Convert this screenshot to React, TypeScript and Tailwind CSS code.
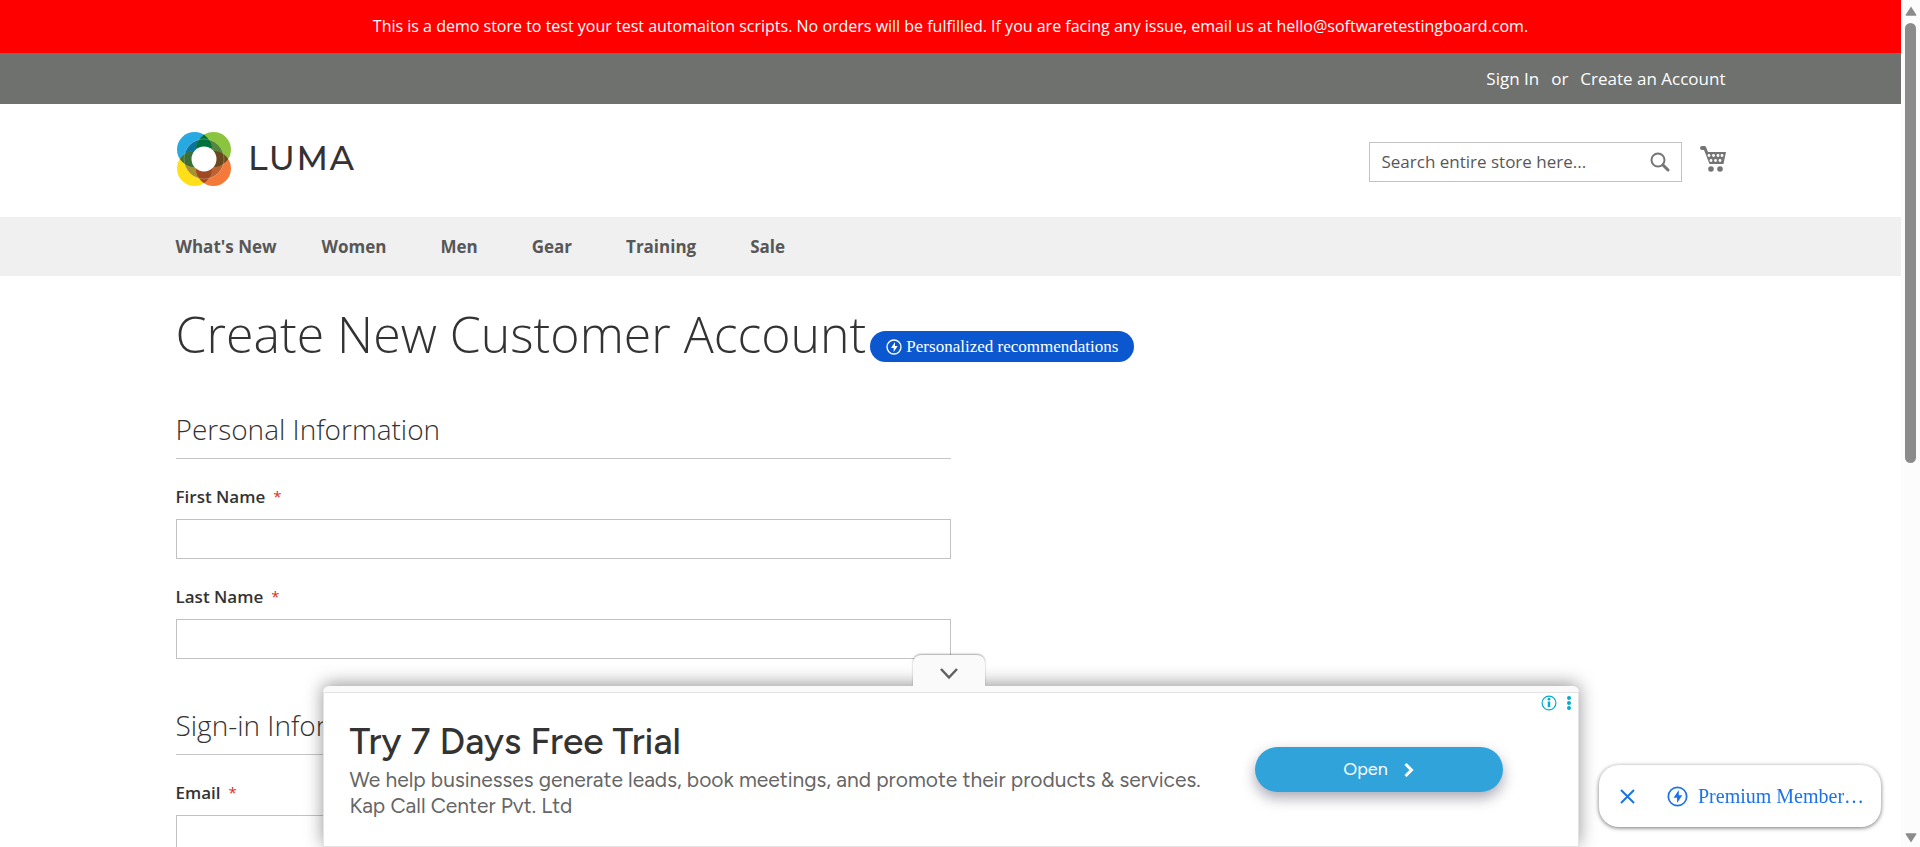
import type { ReactNode } from "react";

const navItems = ["What's New", "Women", "Men", "Gear", "Training", "Sale"];

const basketHoles = [
  [9, 9.5], [13.500, 9.5], [18, 9.5], [22, 9.5],
  [11, 14.500], [15.500, 14.500], [20, 14.500],
];

function Container({ children, className = "" }: { children: ReactNode; className?: string }) {
  return <div className={"mx-auto w-full max-w-[1550px] " + className}>{children}</div>;
}

function LumaLogo() {
  return (
    <svg viewBox="0 0 184 54" className="h-[54px] w-[184px]" role="img" aria-label="Luma">
      <clipPath id="tl"><circle cx="17.5" cy="17.5" r="17.5" /></clipPath>
      <clipPath id="tr"><circle cx="36.500" cy="17.5" r="17.5" /></clipPath>
      <clipPath id="bl"><circle cx="17.5" cy="36.500" r="17.5" /></clipPath>
      <clipPath id="br"><circle cx="36.500" cy="36.500" r="17.5" /></clipPath>
      <circle cx="17.5" cy="17.5" r="17.5" fill="#27a9e1" />
      <circle cx="36.500" cy="17.5" r="17.5" fill="#8bc53f" />
      <circle cx="17.5" cy="36.500" r="17.5" fill="#ffdf17" />
      <circle cx="36.500" cy="36.500" r="17.5" fill="#f47a3a" />
      <circle cx="27" cy="27" r="20" fill="#0c749c" clipPath="url(#tl)" />
      <circle cx="27" cy="27" r="20" fill="#54863c" clipPath="url(#tr)" />
      <circle cx="27" cy="27" r="20" fill="#a79230" clipPath="url(#bl)" />
      <circle cx="27" cy="27" r="20" fill="#bd6230" clipPath="url(#br)" />
      <g clipPath="url(#tl)">
        <circle cx="36.500" cy="17.5" r="17.5" fill="#00703c" />
        <circle cx="17.5" cy="36.500" r="17.5" fill="#3a6f35" />
      </g>
      <g clipPath="url(#br)">
        <circle cx="36.500" cy="17.5" r="17.5" fill="#68481f" />
        <circle cx="17.5" cy="36.500" r="17.5" fill="#a04a24" />
      </g>
      <circle cx="27" cy="27" r="20" fill="none" stroke="#ffffff" strokeOpacity="0.25" />
      <circle cx="27" cy="27" r="12.500" fill="#fff" />
      <text x="71" y="38" className="fill-[#333] font-['Montserrat',Lato,sans-serif] text-[33px] font-medium tracking-wider">LUMA</text>
    </svg>
  );
}

function Bolt({ className }: { className: string }) {
  return (
    <svg viewBox="0 0 24 24" className={className} fill="none" aria-hidden="true">
      <circle cx="12" cy="12" r="10.500" stroke="currentColor" strokeWidth="2" />
      <path d="M13.500 4.500 7.500 13.500h4v6l6-9h-4z" fill="currentColor" />
    </svg>
  );
}

function Field({ id, label }: { id: string; label: string }) {
  return (
    <div className="mb-[25px]">
      <label htmlFor={id} className="mb-2.5 flex h-[25px] items-center gap-2 text-[17px] font-semibold text-[#333]">
        {label}
        <span className="text-[15px] font-normal text-[#e02b27]">*</span>
      </label>
      <input id={id} className="block h-10 w-full border border-[#c2c2c2] bg-white px-3 text-[17px]" />
    </div>
  );
}

function Legend({ children }: { children: ReactNode }) {
  return (
    <h2 className="mb-[25px] border-b border-[#c6c6c6] pb-3 text-[28px] leading-[34px] font-light text-[#333]">
      {children}
    </h2>
  );
}

function Scrollbar() {
  return (
    <div className="fixed inset-y-0 right-0 flex w-[19px] flex-col items-center justify-between bg-[#fcfcfc] pt-1.5 pb-1" aria-hidden="true">
      <div className="flex flex-col items-center gap-[7px]">
        <svg viewBox="0 0 12 10" className="h-2.5 w-3"><path d="M6 0.500 11.500 9a1 1 0 0 1-1 .8h-9a1 1 0 0 1-1-.8z" fill="#8b8b8b" /></svg>
        <div className="h-[52vh] w-[11px] rounded-full bg-[#8b8b8b]" />
      </div>
      <svg viewBox="0 0 12 10" className="h-2.5 w-3"><path d="M6 9.500 11.500 1a1 1 0 0 0-1-.8h-9a1 1 0 0 0-1 .8z" fill="#8b8b8b" /></svg>
    </div>
  );
}

function AdBanner() {
  return (
    <aside className="fixed right-[19px] bottom-0 left-0 mx-auto max-w-[1256px] rounded-t-md bg-[#fafafa] pt-1.5 shadow-[0_-2px_18px_rgba(0,0,0,0.42)]">
      <button aria-label="Hide advertisement" className="absolute right-1 bottom-full left-0 mx-auto flex h-[31px] w-[72px] items-center justify-center rounded-t-lg bg-[#fafafa] shadow-[0_-1px_2px_rgba(0,0,0,0.35)] [clip-path:inset(-4px_-4px_0_-4px)]">
        <svg viewBox="0 0 18 12" className="mt-1.5 h-3 w-[18px]" fill="none" stroke="#616161" strokeWidth="2.500"><path d="m1 1 8 8.500L17 1" /></svg>
      </button>
      <div className="relative flex h-[155px] items-center border border-[#e3e3e3] bg-white pr-[75px] pl-[26px] font-['Figtree',Lato,sans-serif]">
        <div className="flex-1 pb-0.5">
          <h3 className="text-[37px] leading-[44px] font-medium text-[#333]">Try 7 Days Free Trial</h3>
          <p className="pt-1 text-[21px] leading-[26px] text-[#666]">
            We help businesses generate leads, book meetings, and promote their products &amp; services.
            <br />
            Kap Call Center Pvt. Ltd
          </p>
        </div>
        <button className="flex h-[45px] w-[248px] items-center justify-center gap-4 rounded-full bg-[#30a3db] text-[18px] text-white shadow-[0_6px_14px_rgba(40,40,70,0.4)]">
          Open
          <svg viewBox="0 0 10 14" className="h-3.5 w-2.5" fill="none" stroke="#fff" strokeWidth="3"><path d="m1.500 1 6 6-6 6" /></svg>
        </button>
        <div className="absolute top-0.5 right-[7px] flex items-center gap-2.5">
          <svg viewBox="0 0 16 16" className="size-4" fill="none"><circle cx="8" cy="8" r="6.900" stroke="#00aecd" strokeWidth="1.200" /><path d="M8 6.500V12" stroke="#00aecd" strokeWidth="2.500" /><circle cx="8" cy="4.200" r="1.400" fill="#00aecd" /></svg>
          <svg viewBox="0 0 4 16" className="h-4 w-1" fill="#00aecd"><circle cx="2" cy="3" r="2" /><circle cx="2" cy="8" r="2" /><circle cx="2" cy="13" r="2" /></svg>
        </div>
      </div>
    </aside>
  );
}

export default function App() {
  return (
    <div className="h-screen overflow-hidden bg-white pr-[19px] font-['Open_Sans',sans-serif] text-[17px] text-[#333]">
      <p className="bg-[#ff0000] px-4 py-3.5 text-center text-[16px] leading-[25px] text-white">
        This is a demo store to test your test automaiton scripts. No orders will be fulfilled. If you are facing any issue, email us at hello@softwaretestingboard.com.
      </p>
      <header>
        <div className="bg-[#6e716e] text-white">
          <Container className="flex h-[51px] items-center justify-end">
            <a href="#signin">Sign In</a>
            <span className="mx-3">or</span>
            <a href="#create">Create an Account</a>
          </Container>
        </div>
        <Container className="flex h-[113px] items-center justify-between">
          <a href="#home" className="mb-1 pl-px"><LumaLogo /></a>
          <div className="flex items-center gap-[18px] pt-0.5">
            <form className="relative">
              <input aria-label="Search" placeholder="Search entire store here..." className="block h-10 w-[313px] border border-[#c2c2c2] bg-white pr-11 pl-3 text-[17px] placeholder:text-[#575757]" />
              <button type="button" aria-label="Search store" className="absolute inset-y-0 right-3 flex items-center">
                <svg viewBox="0 0 20 20" className="size-5" fill="none" stroke="#757575"><circle cx="8" cy="8" r="6.500" strokeWidth="2" /><path d="m13 13 5 5" strokeWidth="3" strokeLinecap="round" /></svg>
              </button>
            </form>
            <a href="#cart" aria-label="My Cart" className="mb-1.5">
              <svg viewBox="0 0 26 26" className="size-[26px]" fill="#757575">
                <path d="M2 0h2.500q1 0 1.500 1l2 5h18l-2.500 12H9.500L4 4H2a2 2 0 0 1 0-4z" />
                <circle cx="11" cy="23" r="2.800" />
                <circle cx="20" cy="23" r="2.800" />
                {basketHoles.map(([x, y]) => (
                  <circle key={x + "-" + y} cx={x} cy={y} r="1.400" fill="#fff" />
                ))}
              </svg>
            </a>
          </div>
        </Container>
        <nav className="bg-[#f0f0f0]">
          <Container className="flex h-[59px] items-center gap-[54px] text-[17px] font-bold text-[#575757]">
            {navItems.map((item) => (
              <a key={item} href="#nav" className="first:-mr-[9px]">{item}</a>
            ))}
          </Container>
        </nav>
      </header>
      <main>
        <Container>
          <div className="flex items-end pt-6 pb-11">
            <h1 className="text-[50px] leading-[68px] font-light">Create New Customer Account</h1>
            <button className="mb-1.5 ml-1 flex h-[31px] items-center gap-1 rounded-full bg-[#0b57d0] px-4 font-['Liberation_Serif',serif] text-[17px] text-white">
              <Bolt className="size-4" />
              Personalized recommendations
            </button>
          </div>
          <form className="w-1/2">
            <Legend>Personal Information</Legend>
            <Field id="first" label="First Name" />
            <Field id="last" label="Last Name" />
            <div className="pt-6">
              <Legend>Sign-in Information</Legend>
              <Field id="email" label="Email" />
            </div>
          </form>
        </Container>
      </main>
      <AdBanner />
      <div className="fixed right-[39px] bottom-5 flex h-[62px] w-[282px] items-center rounded-[20px] bg-white pl-[21px] font-['Liberation_Serif',serif] text-[20px] text-[#1a73e8] shadow-[0_1px_4px_rgba(0,0,0,0.55)]">
        <button aria-label="Close">
          <svg viewBox="0 0 15 15" className="size-[15px]" fill="none" stroke="currentColor" strokeWidth="2"><path d="m1 1 13 13M14 1 1 14" /></svg>
        </button>
        <button className="ml-8 flex items-center gap-2.5">
          <Bolt className="size-[21px]" />
          Premium Member…
        </button>
      </div>
      <Scrollbar />
    </div>
  );
}
